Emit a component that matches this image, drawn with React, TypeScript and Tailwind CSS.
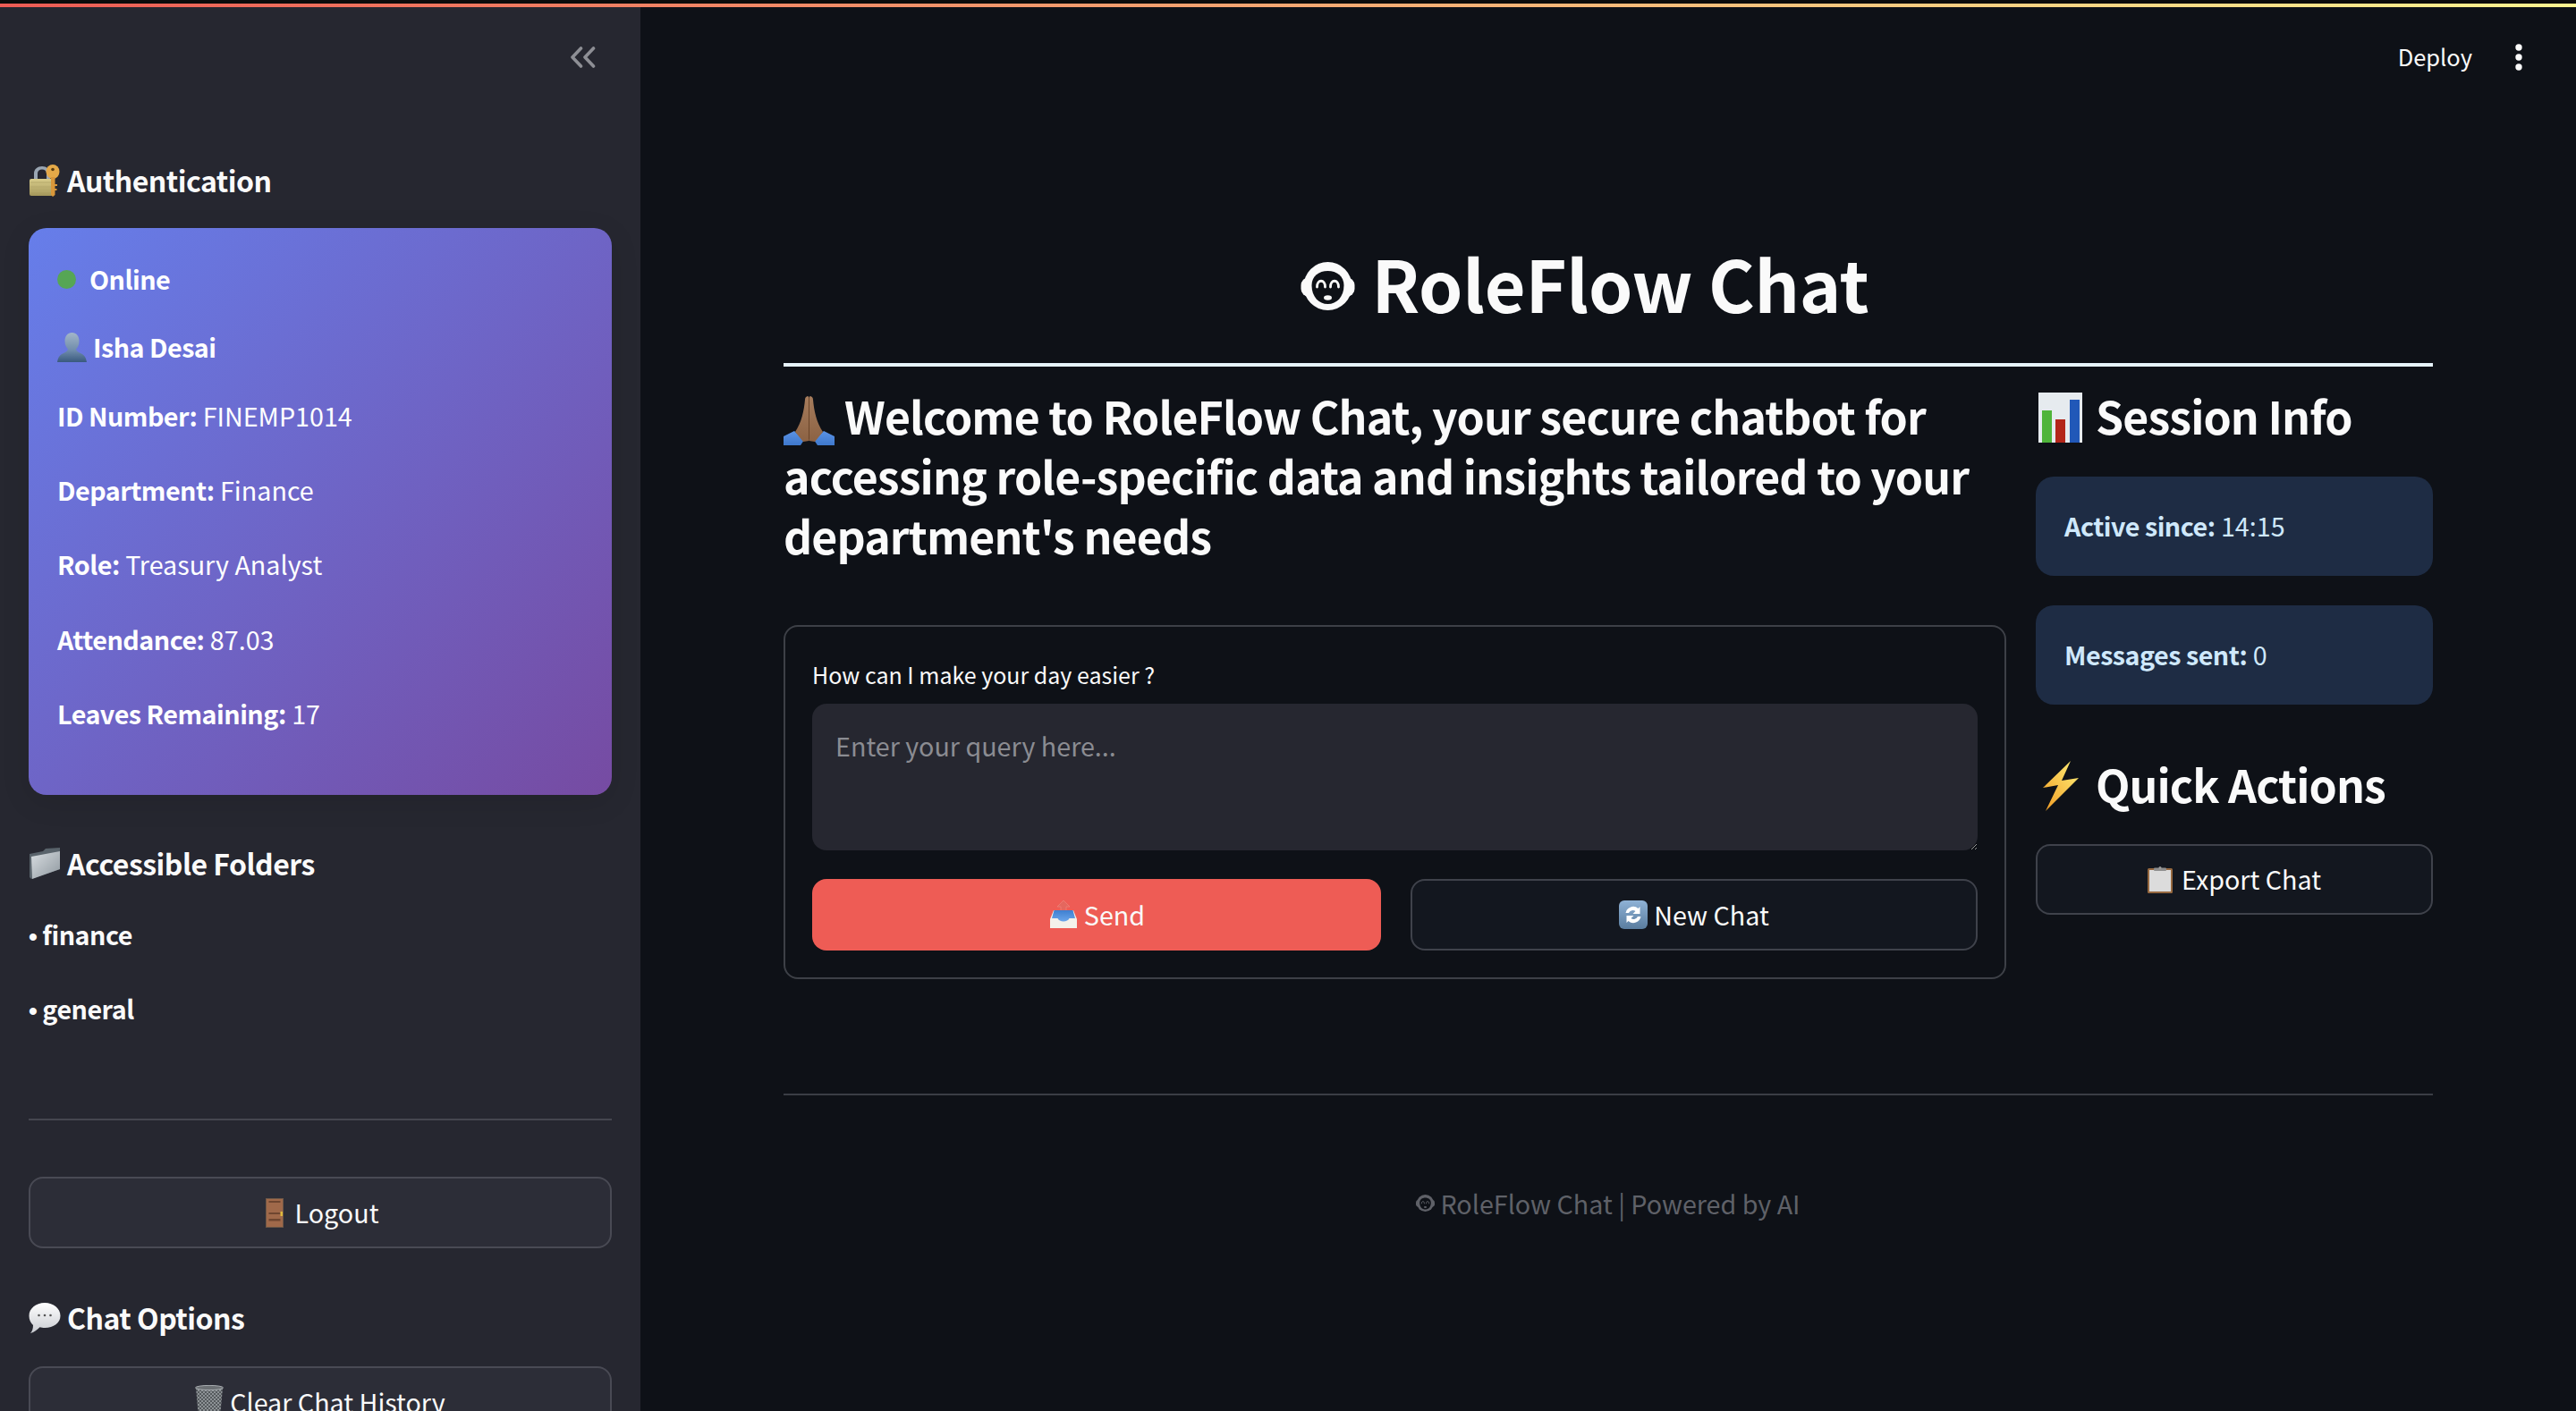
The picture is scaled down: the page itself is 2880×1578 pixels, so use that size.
import React from "react";

const font = { fontFamily: '"Noto Sans CJK SC", "Noto Sans", sans-serif' };

function Robot({ className }: { className: string }) {
  return (
    <svg viewBox="0 0 60 54" className={className}>
      <rect x="0" y="17" width="60" height="22" rx="9" fill="currentColor" />
      <ellipse cx="30" cy="27" rx="27" ry="27" fill="currentColor" />
      <path d="M12 26c0-10 8-16 18-16s18 6 18 16c0 13-8 21-18 21S12 39 12 26Z" fill="#0e1117" />
      <path d="M18 28c0-9 9-9 9 0M33 28c0-9 9-9 9 0" fill="none" stroke="currentColor" strokeWidth="2.800" strokeLinecap="round" />
      <ellipse cx="30" cy="40" rx="4.500" ry="2.800" fill="currentColor" />
    </svg>
  );
}

function LockKey() {
  return (
    <svg viewBox="0 0 36 36" className="w-[36px] h-[36px] shrink-0">
      <defs>
        <linearGradient id="lockb" x1="0" y1="0" x2="0" y2="1"><stop offset="0" stopColor="#d9cd8b" /><stop offset="1" stopColor="#a3965a" /></linearGradient>
      </defs>
      <path d="M6 17V10c0-5 4-8 9-8s9 3 9 8v7h-4V10c0-3-2-4.500-5-4.500S10 7 10 10v7Z" fill="#9aa6b2" />
      <rect x="1" y="16" width="26" height="19" rx="2" fill="url(#lockb)" />
      <path d="M2 20h24M2 25h24M2 30h24" stroke="#b5a96c" strokeWidth="1" />
      <ellipse cx="27" cy="8" rx="7.500" ry="8" fill="#e5a948" />
      <circle cx="27" cy="5.500" r="1.800" fill="#5b3d10" />
      <path d="M25 14h4.500v20L27 36l-2-2Z" fill="#d9973a" />
      <path d="M29 22h3v2h-3ZM29 27h2.500v2H29Z" fill="#d9973a" />
    </svg>
  );
}

function Bust() {
  return (
    <svg viewBox="0 0 33 33" className="w-[33px] h-[33px] shrink-0">
      <defs>
        <linearGradient id="bust" x1="0" y1="0" x2="0" y2="1"><stop offset="0" stopColor="#a3b6c9" /><stop offset="0.6" stopColor="#6f8cab" /><stop offset="1" stopColor="#39597e" /></linearGradient>
      </defs>
      <path d="M16.500 0c5 0 8 4 8 9.500 0 4-1.500 7-3.500 9 .5 2 2 3 5 4.500 4 2 6 4 7 10H0c1-6 3-8 7-10 3-1.500 4.500-2.500 5-4.500-2-2-3.500-5-3.500-9C8.500 4 11.500 0 16.500 0Z" fill="url(#bust)" />
    </svg>
  );
}

function FolderIcon() {
  return (
    <svg viewBox="0 0 36 36" className="w-[36px] h-[36px] shrink-0">
      <defs>
        <linearGradient id="fold" x1="0" y1="0" x2="1" y2="1"><stop offset="0" stopColor="#d8dde1" /><stop offset="1" stopColor="#8f989f" /></linearGradient>
      </defs>
      <path d="M1 7l15-3 3-3 16-1v24L3 35 1 33Z" fill="#59636b" />
      <path d="M3 10l32-6v20L4 35Z" fill="url(#fold)" />
    </svg>
  );
}

function Door() {
  return (
    <svg viewBox="0 0 20 33" className="w-[20px] h-[33px] shrink-0 ml-[4px] mr-[6px]">
      <rect width="20" height="33" fill="#6e5747" />
      <rect x="1" y="1" width="18" height="31" fill="#a0694a" />
      <rect x="3.500" y="3" width="13" height="2" fill="#6f4630" />
      <rect x="3.500" y="16" width="13" height="2" fill="#6f4630" />
      <rect x="3.500" y="23" width="13" height="2.500" fill="#6f4630" />
      <rect x="16.500" y="15" width="2.500" height="5" fill="#e0b93d" />
    </svg>
  );
}

function Bubble() {
  return (
    <svg viewBox="0 0 36 36" className="w-[36px] h-[36px] shrink-0">
      <defs>
        <linearGradient id="bub" x1="0" y1="0" x2="0" y2="1"><stop offset="0" stopColor="#ffffff" /><stop offset="1" stopColor="#c9ccd1" /></linearGradient>
      </defs>
      <path d="M18 1c10 0 17.500 6.500 17.500 14.500S28 29 18 29c-2 0-4-.3-5.500-.8C10 31 6 34 2 35c2-2 3-5 3-9C2 23 .5 19.500.5 15.500.5 7.500 8 1 18 1Z" fill="url(#bub)" />
      <circle cx="11.500" cy="15" r="1.300" fill="#555" /><circle cx="18" cy="15" r="1.300" fill="#555" /><circle cx="24.500" cy="15" r="1.300" fill="#555" />
    </svg>
  );
}

function Trash() {
  return (
    <svg viewBox="0 0 32 36" className="w-[32px] h-[36px] shrink-0 mt-[-2px]">
      <defs>
        <pattern id="mesh" width="4" height="4" patternUnits="userSpaceOnUse"><rect width="4" height="4" fill="#8d9296" /><path d="M0 0l4 4M4 0L0 4" stroke="#4f5357" strokeWidth=".9" /></pattern>
      </defs>
      <path d="M1 3h30l-3 33H4Z" fill="url(#mesh)" />
      <ellipse cx="16" cy="3" rx="15.500" ry="2.600" fill="#6c7074" stroke="#a8acb0" />
    </svg>
  );
}

function Pray() {
  return (
    <svg viewBox="0 0 57 55" className="w-[57px] h-[55px] shrink-0">
      <defs>
        <linearGradient id="hand" x1="0" y1="0" x2="0" y2="1"><stop offset="0" stopColor="#a67c5c" /><stop offset="1" stopColor="#8c6243" /></linearGradient>
        <linearGradient id="slv" x1="0" y1="0" x2="0" y2="1"><stop offset="0" stopColor="#5b93e6" /><stop offset="1" stopColor="#3e78cc" /></linearGradient>
      </defs>
      <path d="M0 45 12 39 23 49 19 55H0Z" fill="url(#slv)" />
      <path d="M57 45 45 39 34 49 38 55H57Z" fill="url(#slv)" />
      <path d="M24 4C24 1 26 0 27.500 0L28.500 2 28.500 50 22 51 13 40C20 30 23 16 24 4Z" fill="url(#hand)" />
      <path d="M33 4C33 1 31 0 29.500 0L28.500 2 28.500 50 35 51 44 40C37 30 34 16 33 4Z" fill="url(#hand)" />
      <path d="M28.500 2V48" stroke="#6a4529" strokeWidth="1" />
    </svg>
  );
}

function Chart() {
  return (
    <svg viewBox="0 0 49 56" className="w-[49px] h-[56px] shrink-0">
      <rect width="49" height="56" fill="#e6ebef" />
      <rect x="4" y="20" width="11" height="36" fill="#4fb43a" />
      <rect x="19" y="30" width="11" height="26" fill="#b3261a" />
      <rect x="35" y="8" width="11" height="48" fill="#2158b8" />
    </svg>
  );
}

function Bolt() {
  return (
    <svg viewBox="0 0 40 56" className="w-[40px] h-[56px] shrink-0">
      <defs>
        <linearGradient id="bolt" x1="1" y1="0" x2="0" y2="1"><stop offset="0" stopColor="#fff17a" /><stop offset="1" stopColor="#f09a22" /></linearGradient>
      </defs>
      <path d="M31 0 0 30l17-3L3 56l37-37-19 3Z" fill="url(#bolt)" />
    </svg>
  );
}

function Clipboard() {
  return (
    <svg viewBox="0 0 28 30" className="w-[28px] h-[30px] shrink-0 mr-[3px]">
      <rect x="0" y="2" width="28" height="28" rx="1.500" fill="#96683f" />
      <rect x="2" y="4" width="24" height="24" fill="#dcdcdc" />
      <rect x="7" y="1.500" width="14" height="3.500" rx="1" fill="#8f8f8f" />
      <circle cx="14" cy="1.500" r="1.500" fill="#9a9a9a" />
    </svg>
  );
}

function Outbox() {
  return (
    <svg viewBox="0 0 33 32" className="w-[33px] h-[32px] shrink-0">
      <defs>
        <linearGradient id="tray" x1="0" y1="0" x2="0" y2="1"><stop offset="0" stopColor="#3f7fd0" /><stop offset="1" stopColor="#6aa5ea" /></linearGradient>
      </defs>
      <path d="M17 0 24 7H20V12H14V7H10Z" fill="#e4675e" stroke="#f08a80" strokeWidth=".6" />
      <path d="M2 21 6 11H28L32 21V31H2Z" fill="#f4f1ea" />
      <path d="M6.500 11H27.500L30 20H23.500C22 24.500 12 24.500 10.500 20H4Z" fill="url(#tray)" />
    </svg>
  );
}

function RefreshIcon() {
  return (
    <svg viewBox="0 0 32 32" className="w-[32px] h-[32px] shrink-0">
      <defs>
        <linearGradient id="ref" x1="0" y1="0" x2="0" y2="1"><stop offset="0" stopColor="#8fb2d6" /><stop offset="1" stopColor="#5a7d9f" /></linearGradient>
      </defs>
      <rect width="32" height="32" rx="6" fill="url(#ref)" />
      <path d="M7.500 14a8.500 8.500 0 0 1 14-5l2-2v8h-8l3-3a5 5 0 0 0-7.500 2ZM24.500 18a8.500 8.500 0 0 1-14 5l-2 2v-8h8l-3 3a5 5 0 0 0 7.500-2Z" fill="#fff" />
    </svg>
  );
}

function SideHeading({ icon, text, className }: { icon: React.ReactNode; text: string; className: string }) {
  return (
    <h3 className={`flex items-center gap-[7px] h-[48px] text-[32px] tracking-[-0.5px] leading-[48px] font-semibold text-[#fafafa] ${className}`}>
      {icon}
      <span className="mt-[-3px]">{text}</span>
    </h3>
  );
}

function Field({ label, value, className = "" }: { label: string; value: string; className?: string }) {
  return (
    <p className={`h-[51px] text-[28.7px] leading-[49px] text-white ${className}`}>
      <strong className="font-semibold tracking-[-0.5px]">{label}</strong> {value}
    </p>
  );
}

function Btn({ icon, text, className }: { icon: React.ReactNode; text: string; className: string }) {
  return (
    <button className={`flex items-center justify-center gap-[7px] rounded-[16px] text-[28.7px] leading-[49px] text-[#fafafa] ${className}`}>
      {icon}
      <span className="mt-[-2px]">{text}</span>
    </button>
  );
}

function Bullet({ text, className }: { text: string; className: string }) {
  return (
    <p className={`h-[51px] text-[28.7px] tracking-[-0.5px] leading-[49px] font-semibold text-[#fafafa] ${className}`}>
      <span className="font-['Liberation_Sans'] text-[28px] mr-[6px]">•</span>
      {text}
    </p>
  );
}

export default function App() {
  return (
    <div style={font} className="flex flex-col h-[1578px] overflow-hidden bg-[#0e1117]">
      <div className="h-[4px] shrink-0 bg-[#0c0c0c]" />
      <div className="h-[4px] shrink-0 bg-[linear-gradient(90deg,#ee5c55,#fdf38f)]" />
      <div className="flex flex-1 min-h-0">
        <aside className="w-[716px] shrink-0 bg-[#262730] px-[32px]">
          <div className="h-[170px] flex justify-end pt-[44px] pr-[17px]">
            <svg viewBox="0 0 30 24" className="w-[31px] h-[24px] text-[#8e8f95]" fill="none" stroke="currentColor" strokeWidth="3.600" strokeLinecap="round" strokeLinejoin="round">
              <path d="M13 2 3.500 12 13 22M27 2 17.500 12 27 22" />
            </svg>
          </div>
          <SideHeading icon={<LockKey />} text="Authentication" className="" />
          <div className="mt-[29px] h-[634px] rounded-[20px] bg-[linear-gradient(135deg,#667eea_0%,#764ba2_100%)] px-[32px] pt-[32px] shadow-[0_8px_32px_rgba(0,0,0,0.1)]">
            <p className="flex items-center gap-[15px] h-[51px] text-[28.7px] tracking-[-0.5px] leading-[49px] font-semibold text-white">
              <span className="w-[21px] h-[21px] rounded-full bg-[#56a655]" />
              <span className="mt-[-3px]">Online</span>
            </p>
            <p className="flex items-center gap-[7px] mt-[25px] h-[51px] text-[28.7px] tracking-[-0.5px] leading-[49px] font-semibold text-white">
              <Bust />
              <span className="mt-[-2px]">Isha Desai</span>
            </p>
            <Field label="ID Number:" value="FINEMP1014" className="mt-[26px]" />
            <Field label="Department:" value="Finance" className="mt-[32px]" />
            <Field label="Role:" value="Treasury Analyst" className="mt-[32px]" />
            <Field label="Attendance:" value="87.03" className="mt-[33px]" />
            <Field label="Leaves Remaining:" value="17" className="mt-[32px]" />
          </div>
          <SideHeading icon={<FolderIcon />} text="Accessible Folders" className="mt-[53px]" />
          <Bullet text="finance" className="mt-[30px]" />
          <Bullet text="general" className="mt-[32px]" />
          <div className="mt-[97px] h-[2px] bg-[#45464f]" />
          <Btn icon={<Door />} text="Logout" className="mt-[63px] w-full h-[80px] bg-[#2c2d37] border-2 border-[#494a54]" />
          <SideHeading icon={<Bubble />} text="Chat Options" className="mt-[54px]" />
          <Btn icon={<Trash />} text="Clear Chat History" className="mt-[30px] w-full h-[80px] bg-[#2c2d37] border-2 border-[#494a54]" />
        </aside>
        <main className="flex-1 min-w-0">
          <div className="h-[112px] flex items-start justify-end pt-[37px] pr-[60px] gap-[48px]">
            <span className="text-[25.500px] leading-[36px] text-[#fafafa]">Deploy</span>
            <svg viewBox="0 0 8 32" className="w-[8px] h-[32px] mt-[3px] text-[#fafafa]" fill="currentColor">
              <circle cx="4" cy="5" r="3.700" /><circle cx="4" cy="16" r="3.700" /><circle cx="4" cy="27" r="3.700" />
            </svg>
          </div>
          <div className="px-[160px]">
            <h1 className="mt-[147px] pr-[52px] flex items-center justify-center gap-[18px] text-[79px] tracking-[-0.3px] leading-[100px] font-bold text-[#fafafa] h-[106px]">
              <Robot className="w-[61px] h-[54px] shrink-0 text-[#fafafa]" />
              <span className="mt-[-8px]">RoleFlow Chat</span>
            </h1>
            <div className="mt-[33px] h-[4px] bg-[#e6f3fb]" />
            <div className="mt-[23px] flex gap-[33px]">
              <section className="w-[1367px] shrink-0">
                <h2 className="mt-[-2px] text-[50px] tracking-[-0.87px] leading-[67px] font-semibold text-[#fafafa]">
                  <span className="inline-flex align-[-12px] mr-[11px]"><Pray /></span>
                  Welcome to RoleFlow Chat, your secure chatbot for accessing role-specific data and insights tailored to your department's needs
                </h2>
                <form className="mt-[67px] h-[396px] rounded-[16px] border-2 border-[#3d4047] px-[30px] pt-[36px]">
                  <label className="block h-[36px] text-[25px] leading-[34px] text-[#fafafa]">How can I make your day easier ?</label>
                  <textarea placeholder="Enter your query here..." className="mt-[14px] block w-full h-[164px] rounded-[16px] bg-[#262730] px-[26px] py-[22px] text-[28.7px] leading-[49px] text-[#fafafa] placeholder:text-[#8b8c92] outline-none" />
                  <div className="mt-[32px] flex gap-[33px]">
                    <Btn icon={<Outbox />} text="Send" className="w-[636px] shrink-0 h-[80px] bg-[#ee5c55]" />
                    <Btn icon={<RefreshIcon />} text="New Chat" className="flex-1 h-[80px] bg-[#13171f] border-2 border-[#3f424b]" />
                  </div>
                </form>
              </section>
              <section className="flex-1 min-w-0">
                <h2 className="flex items-center gap-[15px] pl-[3px] h-[67px] text-[50px] tracking-[-0.9px] leading-[63px] font-semibold text-[#fafafa]">
                  <Chart /><span className="mt-[-4px]">Session Info</span>
                </h2>
                <div className="mt-[33px] h-[111px] rounded-[20px] bg-[#1e2c44] px-[32px] flex items-center text-[28.7px] leading-[49px] text-[#cfe8fb]">
                  <p className="mt-[-2px]"><strong className="font-semibold tracking-[-0.5px]">Active since:</strong> 14:15</p>
                </div>
                <div className="mt-[33px] h-[111px] rounded-[20px] bg-[#1e2c44] px-[32px] flex items-center text-[28.7px] leading-[49px] text-[#cfe8fb]">
                  <p className="mt-[-2px]"><strong className="font-semibold tracking-[-0.5px]">Messages sent:</strong> 0</p>
                </div>
                <h2 className="mt-[57px] flex items-center gap-[19px] pl-[8px] h-[67px] text-[50px] tracking-[-0.9px] leading-[63px] font-semibold text-[#fafafa]">
                  <Bolt /><span className="mt-[-4px]">Quick Actions</span>
                </h2>
                <Btn icon={<Clipboard />} text="Export Chat" className="mt-[32px] w-full h-[79px] bg-[#13171f] border-2 border-[#3f424b]" />
              </section>
            </div>
            <div className="mt-[128px] h-[2px] bg-[#3a3d45]" />
            <p className="mt-[96px] flex items-center justify-center gap-[6px] text-[28.7px] leading-[49px] text-[#5f6168]">
              <Robot className="w-[21px] h-[19px] shrink-0 text-[#5f6168]" />
              <span>RoleFlow Chat | Powered by AI</span>
            </p>
          </div>
        </main>
      </div>
    </div>
  );
}
